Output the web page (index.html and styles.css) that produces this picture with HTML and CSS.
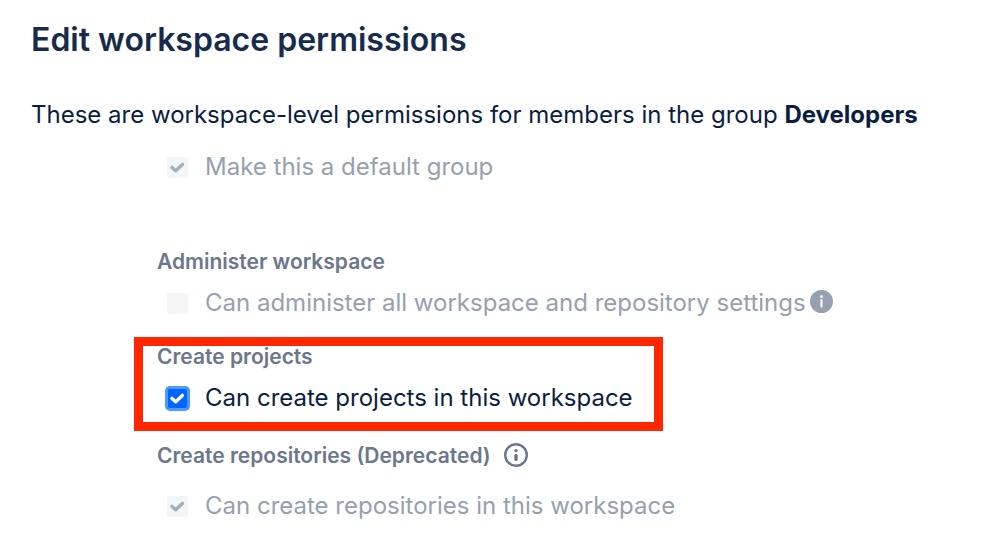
FILE: index.html
```html
<!DOCTYPE html>
<html lang="en">
<head>
    <meta charset="utf-8">
    <meta name="viewport" content="width=device-width, initial-scale=1.0">
    <title>Edit workspace permissions</title>
    <link rel="stylesheet" href="styles.css">
</head>
<body>
    <main class="page">
        <h1 class="page-title">Edit workspace permissions</h1>
        <p class="intro">These are workspace-level permissions for members in the group <strong>Developers</strong></p>

        <form class="permissions">
            <div class="option default-group">
                <input type="checkbox" id="defaultGroup" class="checkbox" checked disabled>
                <label for="defaultGroup">Make this a default group</label>
            </div>

            <div class="group" role="group" aria-labelledby="adminTitle">
                <h2 class="group-title" id="adminTitle">Administer workspace</h2>
                <div class="option">
                    <input type="checkbox" id="administer" class="checkbox" disabled>
                    <label for="administer">Can administer all workspace and repository settings</label>
                    <svg class="info-filled" viewBox="0 0 24 24" aria-hidden="true">
                        <circle cx="12" cy="12" r="12" fill="#97a0af"/>
                        <circle cx="12" cy="7" r="1.4" fill="#fff"/>
                        <path d="M12 10.6v6.6" stroke="#fff" stroke-width="2.2" stroke-linecap="round"/>
                    </svg>
                </div>
            </div>

            <div class="group highlighted" role="group" aria-labelledby="projectsTitle">
                <h2 class="group-title" id="projectsTitle">Create projects</h2>
                <div class="option">
                    <input type="checkbox" id="createProjects" class="checkbox focused" checked>
                    <label for="createProjects">Can create projects in this workspace</label>
                </div>
            </div>

            <div class="group repositories" role="group" aria-labelledby="reposTitle">
                <h2 class="group-title" id="reposTitle">
                    Create repositories (Deprecated)
                    <svg class="info-outline" viewBox="0 0 24 24" aria-hidden="true">
                        <circle cx="12" cy="12" r="10.8" fill="none" stroke="#6b778c" stroke-width="2.4"/>
                        <circle cx="12" cy="7.6" r="1.7" fill="#6b778c"/>
                        <path d="M12 12.4v4" stroke="#6b778c" stroke-width="3.4" stroke-linecap="round"/>
                    </svg>
                </h2>
                <div class="option">
                    <input type="checkbox" id="createRepos" class="checkbox" checked disabled>
                    <label for="createRepos">Can create repositories in this workspace</label>
                </div>
            </div>
        </form>
    </main>
</body>
</html>
```
FILE: styles.css
```css
body {
    margin: 0;
    background: #fff;
    color: #091e42;
    font-family: Inter, "Liberation Sans", sans-serif;
    font-size: 24px;
    line-height: 32px;
}
.page {
    padding: 20px 31px;
}
.page-title {
    margin: 0 0 39px;
    color: #172b4d;
    font-size: 32px;
    font-weight: 600;
    line-height: 40px;
}
.intro {
    margin: 0 0 20px;
}
.permissions {
    display: flex;
    flex-direction: column;
    align-items: flex-start;
    padding-left: 103px;
}
.group {
    padding: 0 23px;
}
.group-title {
    display: flex;
    align-items: center;
    gap: 13px;
    margin: 0 0 14px;
    color: #6b778c;
    font-size: 21px;
    font-weight: 600;
    line-height: 22px;
}
.option {
    display: flex;
    align-items: center;
    padding-left: 10px;
}
.default-group {
    margin: 0 23px 68px;
}
.checkbox {
    appearance: none;
    flex: none;
    width: 21px;
    height: 21px;
    margin: 0 17px 0 0;
    border-radius: 3px;
    background: #f4f5f7 center / 21px 21px no-repeat;
}
.checkbox:checked {
    background-color: #0065ff;
    background-image: url("data:image/svg+xml,%3Csvg xmlns='http://www.w3.org/2000/svg' viewBox='0 0 21 21'%3E%3Cpath d='M5 10.4l3.7 3.4L15.4 7.4' fill='none' stroke='%23fff' stroke-width='3.4' stroke-linecap='round' stroke-linejoin='round'/%3E%3C/svg%3E");
}
.checkbox:disabled:checked {
    background-color: #f4f5f7;
    background-image: url("data:image/svg+xml,%3Csvg xmlns='http://www.w3.org/2000/svg' viewBox='0 0 21 21'%3E%3Cpath d='M5 10.4l3.7 3.4L15.4 7.4' fill='none' stroke='%23a5adba' stroke-width='3.4' stroke-linecap='round' stroke-linejoin='round'/%3E%3C/svg%3E");
}
.checkbox:disabled ~ label {
    color: #97a0af;
}
.focused {
    box-shadow: 0 0 0 2px #4c9aff, inset 0 0 0 1px #4c9aff;
}
.info-filled {
    width: 23px;
    height: 23px;
    margin: 0 0 4px 4px;
}
.info-outline {
    width: 24px;
    height: 24px;
    margin: -4px 0 -2px;
}
/* red frame around the permission being changed */
.highlighted {
    margin: 18px 0 14px;
    padding: 0 21px 8px 14px;
    border: 9px solid #ff2600;
}
.repositories .group-title {
    margin-bottom: 23px;
}
```
